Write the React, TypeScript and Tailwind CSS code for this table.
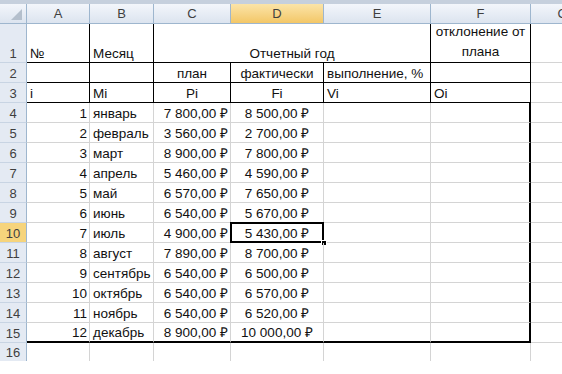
import React from "react";

const R_GRID = "border-r border-r-[#d4d4d4]";
const R_BLACK = "border-r border-r-black";
const R_THICK = "border-r-2 border-r-black";
const B_GRID = "border-b border-b-[#d4d4d4]";
const B_BLACK = "border-b border-b-black";
const B_THICK = "border-b-2 border-b-black";

const CELL = "flex items-end whitespace-nowrap text-[13.5px] leading-[17px] text-[#111]";
const LEFT = "justify-start pl-[3px]";
const RIGHT = "justify-end pr-[2px]";
const CENTER = "justify-center";

const ROWHEAD =
  "flex items-end justify-center border-r border-b border-r-[#9eb6ce] border-b-[#c8d4e3] text-[13px] leading-[17px] text-[#3f3f3f]";
const ROWHEAD_BG = "bg-[#e4eaf3]";
const ROWHEAD_SEL = "bg-[#f6d47c]";

const COLHEAD =
  "flex items-center justify-center border-r border-b border-r-[#9eb6ce] border-b-[#9eb6ce] text-[13px] text-[#3f3f3f]";
const COLHEAD_BG = "bg-linear-to-b from-[#f3f6fb] to-[#dce4ef]";
const COLHEAD_SEL = "bg-linear-to-b from-[#fbe4a8] to-[#f3c766]";

const months = [
  "январь",
  "февраль",
  "март",
  "апрель",
  "май",
  "июнь",
  "июль",
  "август",
  "сентябрь",
  "октябрь",
  "ноябрь",
  "декабрь",
];
const plan = [
  "7 800,00 ₽",
  "3 560,00 ₽",
  "8 900,00 ₽",
  "5 460,00 ₽",
  "6 570,00 ₽",
  "6 540,00 ₽",
  "4 900,00 ₽",
  "7 890,00 ₽",
  "6 540,00 ₽",
  "6 540,00 ₽",
  "6 540,00 ₽",
  "8 900,00 ₽",
];
const fact = [
  "8 500,00 ₽",
  "2 700,00 ₽",
  "7 800,00 ₽",
  "4 590,00 ₽",
  "7 650,00 ₽",
  "5 670,00 ₽",
  "5 430,00 ₽",
  "8 700,00 ₽",
  "6 500,00 ₽",
  "6 570,00 ₽",
  "6 520,00 ₽",
  "10 000,00 ₽",
];

function C({ cls, children }: { cls: string; children?: React.ReactNode }) {
  return <div className={cls}>{children}</div>;
}

export default function App() {
  const cols = ["A", "B", "C", "D", "E", "F", "G"];
  return (
    <div className="w-[562px] h-[374px] overflow-hidden bg-white font-['Liberation_Sans','Arial',sans-serif]">
      <div className="h-[4px] w-full bg-[#c6d0dd]" />
      <div className="grid w-[595px] grid-cols-[27px_63px_64px_77px_93px_107px_100px_64px] grid-rows-[20px_39px_20px_20px_repeat(12,20px)_18px]">
        {/* column header */}
        <div className={`${COLHEAD} ${COLHEAD_BG} relative`}>
          <svg className="absolute right-[4px] bottom-[3px]" width="11" height="11" viewBox="0 0 11 11">
            <polygon points="11,0 11,11 0,11" fill="#b4bfcc" />
          </svg>
        </div>
        {cols.map((c) => (
          <div key={c} className={`${COLHEAD} ${c === "D" ? COLHEAD_SEL : COLHEAD_BG}`}>
            {c}
          </div>
        ))}

        {/* row 1 */}
        <div className={`${ROWHEAD} ${ROWHEAD_BG}`}>1</div>
        <C cls={`${CELL} ${LEFT} ${R_BLACK} ${B_BLACK}`}>№</C>
        <C cls={`${CELL} ${LEFT} ${R_BLACK} ${B_BLACK}`}>Месяц</C>
        <div className={`${CELL} ${CENTER} ${R_BLACK} ${B_BLACK} col-span-3`}>Отчетный год</div>
        <div
          className={`flex items-end justify-center text-center text-[13.5px] leading-[20px] text-[#111] ${R_BLACK} ${B_BLACK}`}
        >
          <span>
            отклонение от
            <br />
            плана
          </span>
        </div>
        <C cls={`${B_GRID}`} />

        {/* row 2 */}
        <div className={`${ROWHEAD} ${ROWHEAD_BG}`}>2</div>
        <C cls={`${CELL} ${LEFT} ${R_BLACK} ${B_BLACK}`} />
        <C cls={`${CELL} ${LEFT} ${R_BLACK} ${B_BLACK}`} />
        <C cls={`${CELL} ${CENTER} ${R_BLACK} ${B_BLACK}`}>план</C>
        <C cls={`${CELL} ${CENTER} ${R_BLACK} ${B_BLACK}`}>фактически</C>
        <C cls={`${CELL} ${LEFT} ${R_BLACK} ${B_BLACK}`}>выполнение, %</C>
        <C cls={`${CELL} ${LEFT} ${R_BLACK} ${B_BLACK}`} />
        <C cls={`${B_GRID}`} />

        {/* row 3 */}
        <div className={`${ROWHEAD} ${ROWHEAD_BG}`}>3</div>
        <C cls={`${CELL} ${LEFT} ${R_BLACK} ${B_BLACK}`}>i</C>
        <C cls={`${CELL} ${LEFT} ${R_BLACK} ${B_BLACK}`}>Mi</C>
        <C cls={`${CELL} ${CENTER} ${R_BLACK} ${B_BLACK}`}>Pi</C>
        <C cls={`${CELL} ${CENTER} ${R_BLACK} ${B_BLACK}`}>Fi</C>
        <C cls={`${CELL} ${LEFT} ${R_BLACK} ${B_BLACK}`}>Vi</C>
        <C cls={`${CELL} ${LEFT} ${R_BLACK} ${B_BLACK}`}>Oi</C>
        <C cls={`${B_GRID}`} />

        {/* rows 4-15 */}
        {months.map((m, i) => {
          const last = i === 11;
          const B = last ? B_THICK : B_GRID;
          const sel = i === 6;
          return (
            <React.Fragment key={m}>
              <div className={`${ROWHEAD} ${sel ? ROWHEAD_SEL : ROWHEAD_BG}`}>{i + 4}</div>
              <C cls={`${CELL} ${RIGHT} ${R_GRID} ${B}`}>{i + 1}</C>
              <C cls={`${CELL} ${LEFT} ${R_GRID} ${B}`}>{m}</C>
              <div className={`${CELL} ${RIGHT} ${R_GRID} ${B} text-[12px]`}>{plan[i]}</div>
              <div className={`${CELL} ${CENTER} ${R_GRID} ${B} relative text-[12px]`}>
                {fact[i]}
                {sel && (
                  <>
                    <div className="pointer-events-none absolute -left-[1px] -top-[1px] -right-[1px] -bottom-[1px] border-2 border-black" />
                    <div className="absolute -right-[4px] -bottom-[4px] h-[6px] w-[6px] border border-white bg-black" />
                  </>
                )}
              </div>
              <C cls={`${CELL} ${R_GRID} ${B}`} />
              <C cls={`${CELL} ${R_THICK} ${B}`} />
              <C cls={`${B_GRID}`} />
            </React.Fragment>
          );
        })}

        {/* row 16 */}
        <div className={`${ROWHEAD} ${ROWHEAD_BG} border-b-0`}>16</div>
        <C cls={`${R_GRID}`} />
        <C cls={`${R_GRID}`} />
        <C cls={`${R_GRID}`} />
        <C cls={`${R_GRID}`} />
        <C cls={`${R_GRID}`} />
        <C cls={`${R_GRID}`} />
        <C cls="" />
      </div>
    </div>
  );
}
